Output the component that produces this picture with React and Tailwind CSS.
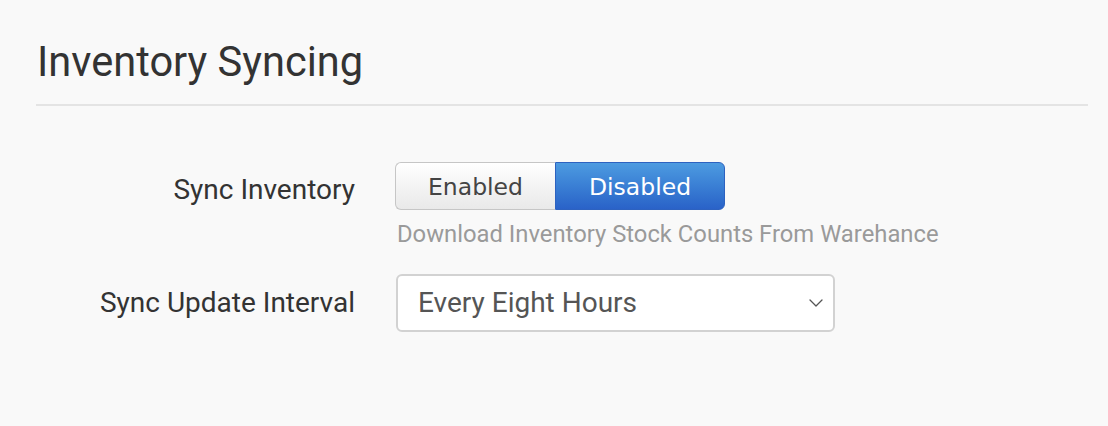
import { ChevronDown } from "lucide-react";

export default function App() {
  return (
    <div
      className="min-h-screen w-full bg-[#f9f9f9] text-[#333]"
      style={{ fontFamily: "Roboto, 'Liberation Sans', sans-serif" }}
    >
      <div className="pl-[36px] pr-[20px] pt-[38px]">
        <h1 className="pl-[1px] text-[41.6px] leading-[48px] font-normal text-[#333]">
          Inventory Syncing
        </h1>
        <div className="mt-[18px] h-[2px] bg-[#e4e4e4]" />

        {/* SYNC INVENTORY */}
        <div className="mt-[56px] flex items-start">
          <label className="w-[319px] pt-[10px] text-right text-[28px] leading-[36px] text-[#333]">
            Sync Inventory
          </label>
          <div className="ml-[40px]">
            <div
              className="flex h-[48px] text-[23.5px]"
              style={{ fontFamily: "'DejaVu Sans', sans-serif" }}
            >
              <button className="w-[160px] rounded-l-[6px] border border-r-0 border-[#c6c6c6] bg-gradient-to-b from-white to-[#e9e9e9] pt-[3px] text-[#444]">
                Enabled
              </button>
              <button className="w-[170px] rounded-r-[6px] border border-[#2d62c0] bg-gradient-to-b from-[#4d9be0] to-[#2a62c8] pt-[3px] text-white">
                Disabled
              </button>
            </div>
            <p className="mt-[9px] pl-[2px] text-[23.8px] leading-[30px] text-[#9a9a9a]">
              Download Inventory Stock Counts From Warehance
            </p>
          </div>
        </div>

        {/* SYNC UPDATE INTERVAL */}
        <div className="mt-[25px] flex items-center">
          <label className="w-[319px] text-right text-[28px] leading-[36px] text-[#333]">
            Sync Update Interval
          </label>
          <div className="ml-[41px] flex h-[58px] w-[439px] items-center justify-between rounded-[6px] border-2 border-[#d2d2d2] bg-white pl-[20px] pr-[5px]">
            <span className="text-[28px] text-[#555]">Every Eight Hours</span>
            <ChevronDown className="h-[24px] w-[24px] text-[#555]" strokeWidth={1.3} />
          </div>
        </div>
      </div>
    </div>
  );
}
